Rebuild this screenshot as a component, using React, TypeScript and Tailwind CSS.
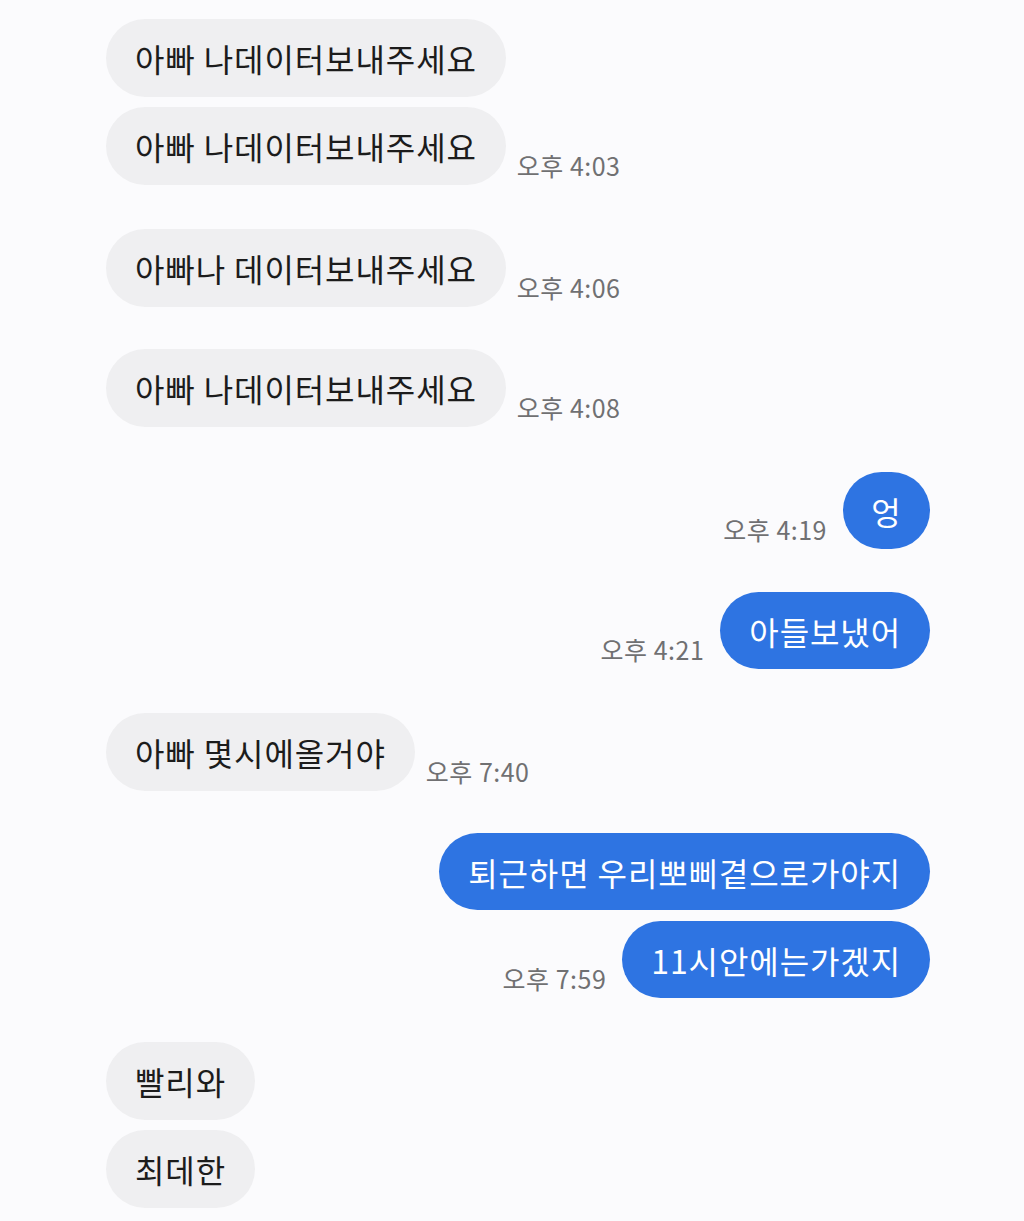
import React from "react";

const font = { fontFamily: '"Noto Sans CJK KR", "Noto Sans", sans-serif' };

function Time({ t }: { t: string }) {
  return (
    <span className="mb-[7px] text-[25px] leading-none text-[#707072] tracking-[0.5px] whitespace-nowrap">
      {t}
    </span>
  );
}

function Recv({ text, time, mt }: { text: string; time?: string; mt: string }) {
  return (
    <div className={`flex items-end gap-[11px] ${mt}`}>
      <div className="h-[78px] px-[29px] rounded-full bg-[#efeff1] flex items-center text-[32px] text-[#1c1c1c] tracking-[0.9px] whitespace-nowrap">
        {text}
      </div>
      {time && <Time t={time} />}
    </div>
  );
}

function Sent({ text, time, mt, round }: { text: string; time?: string; mt: string; round?: boolean }) {
  return (
    <div className={`flex items-end justify-end gap-[16px] ${mt}`}>
      {time && <Time t={time} />}
      <div
        className={`h-[77px] ${round ? "w-[87px] justify-center" : "px-[29px]"} rounded-full bg-[#2e74e2] flex items-center text-[32px] text-white tracking-[0.9px] whitespace-nowrap`}
      >
        {text}
      </div>
    </div>
  );
}

export default function App() {
  return (
    <div style={font} className="w-[1024px] h-[1221px] bg-[#fbfbfd] overflow-hidden">
      <div className="w-[978px] h-full bg-[#fbfbfd] pl-[106px] pr-[48px] pt-[19px] flex flex-col">
        <Recv text="아빠 나데이터보내주세요" mt="mt-0" />
        <Recv text="아빠 나데이터보내주세요" time="오후 4:03" mt="mt-[10px]" />
        <Recv text="아빠나 데이터보내주세요" time="오후 4:06" mt="mt-[44px]" />
        <Recv text="아빠 나데이터보내주세요" time="오후 4:08" mt="mt-[42px]" />
        <Sent text="엉" time="오후 4:19" mt="mt-[45px]" round />
        <Sent text="아들보냈어" time="오후 4:21" mt="mt-[43px]" />
        <Recv text="아빠 몇시에올거야" time="오후 7:40" mt="mt-[44px]" />
        <Sent text="퇴근하면 우리뽀삐곁으로가야지" mt="mt-[42px]" />
        <Sent text="11시안에는가겠지" time="오후 7:59" mt="mt-[11px]" />
        <Recv text="빨리와" mt="mt-[44px]" />
        <Recv text="최데한" mt="mt-[10px]" />
      </div>
    </div>
  );
}
